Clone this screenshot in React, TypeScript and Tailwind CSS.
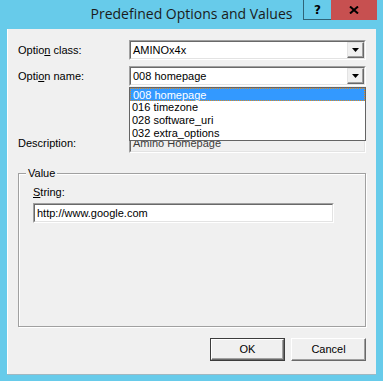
const sans = "font-['Liberation_Sans',Arial,sans-serif]"

function DownArrow() {
  return (
    <svg width="7" height="4" viewBox="0 0 7 4" className="block">
      <path d="M0 0h7L3.5 4z" fill="#000" />
    </svg>
  )
}

function Combo({ value }: { value: string }) {
  return (
    <div className="w-[237px] h-[20px] border border-t-[#a0a0a0] border-l-[#a0a0a0] border-b-white border-r-white">
      <div className="h-full flex bg-white border border-t-[#696969] border-l-[#696969] border-b-[#e3e3e3] border-r-[#e3e3e3]">
        <div className="flex-1 pl-[2px] leading-[16px]">{value}</div>
        <div className="w-[17px] h-full flex items-center justify-center bg-[#f0f0f0] border border-t-[#e3e3e3] border-l-[#e3e3e3] border-b-[#696969] border-r-[#696969] shadow-[inset_-1px_-1px_0_#a0a0a0]">
          <DownArrow />
        </div>
      </div>
    </div>
  )
}

function Sunken({ children, className = "" }: { children: React.ReactNode; className?: string }) {
  return (
    <div className={`h-[20px] border border-t-[#a0a0a0] border-l-[#a0a0a0] border-b-white border-r-white ${className}`}>
      <div className="h-full border border-t-[#696969] border-l-[#696969] border-b-[#e3e3e3] border-r-[#e3e3e3] pl-[2px] leading-[16px]">
        {children}
      </div>
    </div>
  )
}

function Button({ label, isDefault }: { label: string; isDefault?: boolean }) {
  return (
    <div className={`w-[75px] h-[23px] ${isDefault ? "border border-[#3c3c3c]" : ""}`}>
      <div className="h-full flex items-center justify-center bg-[#f0f0f0] border border-t-white border-l-white border-b-[#696969] border-r-[#696969] shadow-[inset_-1px_-1px_0_#a0a0a0]">
        {label}
      </div>
    </div>
  )
}

const options = ["008 homepage", "016 timezone", "028 software_uri", "032 extra_options"]

export default function App() {
  return (
    <div className={`w-[383px] h-[381px] bg-[#67cbea] flex flex-col ${sans} text-[11px] text-black`}>
      {/* Title bar */}
      <div className="h-[29px] flex relative">
        <div className="flex-1 text-center pt-[4px] text-[14px] leading-[20px] text-[#1b1b1b] font-['Open_Sans','Noto_Sans',sans-serif]">
          Predefined Options and Values
        </div>
        <div className="absolute top-0 right-[6px] flex h-[20px]">
          <div className="w-[28px] flex items-center justify-center border-l border-b border-[#2f6478] font-bold text-[12px] font-['DejaVu_Sans',sans-serif]">
            ?
          </div>
          <div className="w-[46px] bg-[#c75050] flex items-center justify-center">
            <svg width="10" height="8" viewBox="0 0 10 8">
              <path d="M1 0.5L9 7.5M9 0.5L1 7.5" stroke="#000" strokeWidth="2" />
            </svg>
          </div>
        </div>
      </div>

      {/* Client area */}
      <div className="mx-[7px] h-[345px] bg-[#f0f0f0] border-l border-white shadow-[0_1px_0_#9fb8c2] flex flex-col pl-[10px] pr-[10px] pt-[11px]">
        <div className="flex items-center h-[20px]">
          <div className="w-[111px]">
            Optio<span className="underline">n</span> class:
          </div>
          <Combo value="AMINOx4x" />
        </div>

        <div className="flex items-center h-[20px] mt-[6px]">
          <div className="w-[111px]">
            Opti<span className="underline">o</span>n name:
          </div>
          <div className="relative">
            <Combo value="008 homepage" />
            <div className="absolute top-[21px] left-0 w-[237px] h-[54px] bg-white border border-[#646464] z-10">
              {options.map((o, i) => (
                <div
                  key={o}
                  className={`h-[13px] leading-[12px] pl-[2px] ${
                    i === 0 ? "bg-[#3399ff] text-white border border-dotted border-[#e08a20] pl-[1px]" : ""
                  }`}
                >
                  {o}
                </div>
              ))}
            </div>
          </div>
        </div>

        <div className="flex items-center h-[20px] mt-[47px]">
          <div className="w-[111px]">Description:</div>
          <Sunken className="w-[237px]">
            <span className="text-[#3c3c3c]">Amino Homepage</span>
          </Sunken>
        </div>

        {/* Value group */}
        <div className="relative mt-[20px] w-[348px] h-[154px] border border-[#a0a0a0] shadow-[1px_1px_0_#fff,inset_1px_1px_0_#fff] pl-[14px] pt-[12px]">
          <span className="absolute -top-[7px] left-[7px] px-[2px] bg-[#f0f0f0] leading-[13px]">Value</span>
          <div className="leading-[13px]">
            <span className="underline">S</span>tring:
          </div>
          <Sunken className="w-[301px] mt-[4px] bg-white">http://www.google.com</Sunken>
        </div>

        <div className="flex justify-end gap-[6px] mt-[11px] pr-0">
          <Button label="OK" isDefault />
          <Button label="Cancel" />
        </div>
      </div>
    </div>
  )
}
